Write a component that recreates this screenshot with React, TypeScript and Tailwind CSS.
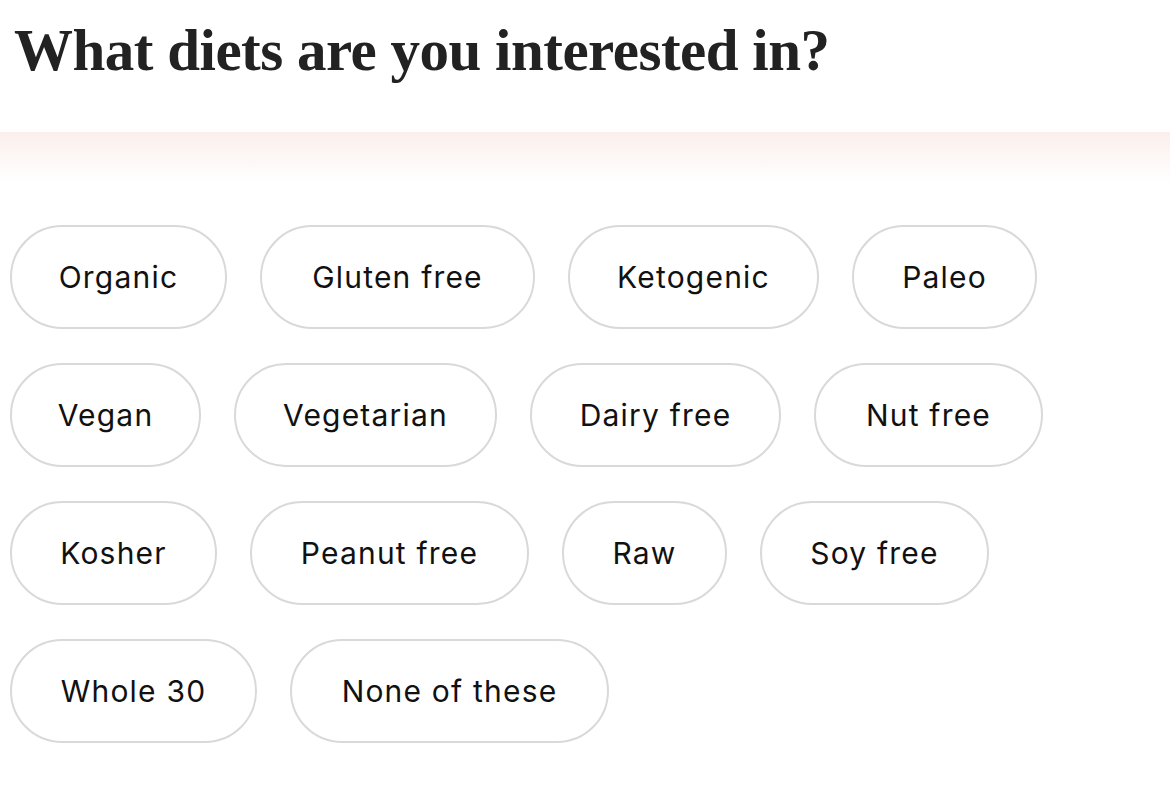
const rows: { label: string; w: string }[][] = [
  [
    { label: 'Organic', w: 'w-[217px]' },
    { label: 'Gluten free', w: 'w-[275px]' },
    { label: 'Ketogenic', w: 'w-[251px]' },
    { label: 'Paleo', w: 'w-[185px]' },
  ],
  [
    { label: 'Vegan', w: 'w-[191px]' },
    { label: 'Vegetarian', w: 'w-[263px]' },
    { label: 'Dairy free', w: 'w-[251px]' },
    { label: 'Nut free', w: 'w-[229px]' },
  ],
  [
    { label: 'Kosher', w: 'w-[207px]' },
    { label: 'Peanut free', w: 'w-[279px]' },
    { label: 'Raw', w: 'w-[165px]' },
    { label: 'Soy free', w: 'w-[229px]' },
  ],
  [
    { label: 'Whole 30', w: 'w-[247px]' },
    { label: 'None of these', w: 'w-[319px]' },
  ],
];

export default function App() {
  return (
    <div className="w-[1170px] h-[794px] bg-white overflow-hidden">
      <div className="h-[132px] px-[14px] pt-[18px]">
        <h1
          className="text-[59px] leading-[64px] font-bold text-[#222222] tracking-[-0.5px]"
          style={{ fontFamily: '"Liberation Serif", "DejaVu Serif", serif' }}
        >
          What diets are you interested in?
        </h1>
      </div>
      <div className="h-[50px] bg-gradient-to-b from-[#fbefec] to-white" />
      <div
        className="flex flex-col gap-[34px] px-[10px] pt-[43px]"
        style={{ fontFamily: 'Inter, "Noto Sans", sans-serif' }}
      >
        {rows.map((row, i) => (
          <div key={i} className="flex gap-[33px]">
            {row.map((p) => (
              <button
                key={p.label}
                className={`${p.w} h-[104px] rounded-full border-2 border-[#d9d9d9] bg-white flex items-center justify-center text-[30px] tracking-[1.2px] text-[#111111]`}
              >
                {p.label}
              </button>
            ))}
          </div>
        ))}
      </div>
    </div>
  );
}
